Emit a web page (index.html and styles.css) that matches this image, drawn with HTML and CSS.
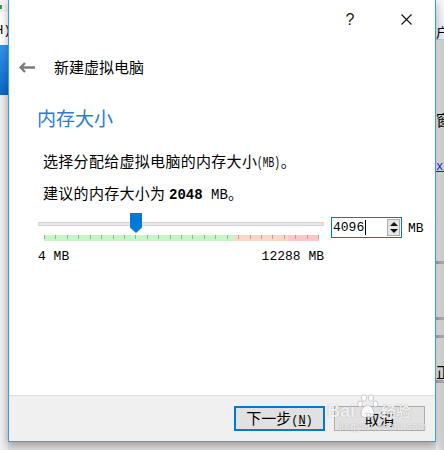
FILE: index.html
```html
<!DOCTYPE html>
<html lang="zh-CN">
<head>
  <meta charset="UTF-8">
  <title>新建虚拟电脑</title>
  <link rel="stylesheet" href="styles.css">
</head>
<body>
  <div class="desk">
    <!-- window behind, left edge -->
    <div class="side side-left">
      <div class="sl-top"><span class="sl-mark"></span></div>
      <div class="sl-menu"><span>(H)</span></div>
      <div class="sl-blue"></div>
      <div class="sl-rest"></div>
    </div>

    <div class="dialog">
      <div class="titlebar">
        <span class="cap-btn help">?</span>
        <span class="cap-btn">
          <svg width="11" height="11" viewBox="0 0 11 11"><path d="M0.5 0.5 L10.5 10.5 M10.5 0.5 L0.5 10.5" stroke="#111" stroke-width="1.1" fill="none"/></svg>
        </span>
      </div>

      <div class="header">
        <svg class="back" width="16" height="11" viewBox="0 0 16 11"><path d="M6 1 L1.6 5.5 L6 10 M1.6 5.5 H16" stroke="#7a7a7a" stroke-width="2.4" fill="none"/></svg>
        <span class="header-title">新建虚拟电脑</span>
      </div>

      <div class="page">
        <h2>内存大小</h2>
        <p class="first">选择分配给虚拟电脑的内存大小<span class="narrow">(MB)</span>。</p>
        <p>建议的内存大小为 <span class="lat"><b>2048</b> MB</span>。</p>

        <div class="mem-row">
          <div class="slider">
            <div class="track-area">
              <div class="track"><div class="thumb"></div></div>
            </div>
            <div class="scale"></div>
            <div class="limits"><span>4 MB</span><span>12288 MB</span></div>
          </div>
          <div class="spin">
            <span class="spin-value">4096</span><span class="caret"></span>
            <span class="spin-btns">
              <span class="spin-up"></span>
              <span class="spin-down"></span>
            </span>
          </div>
          <span class="unit">MB</span>
        </div>
      </div>

      <div class="footer">
        <button class="btn btn-primary">下一步<span class="mn">(<u>N</u>)</span></button>
        <button class="btn">取消</button>
        <!-- screenshot watermark -->
        <div class="wm">
          <div class="wm-row">
            <span class="wm-bai">Bai</span>
            <svg class="wm-paw" width="22" height="27" viewBox="0 0 22 27">
              <g fill="rgba(255,255,255,0.85)" stroke="rgba(140,140,140,0.5)" stroke-width="0.8">
                <ellipse cx="7" cy="5" rx="2.6" ry="3.4"/>
                <ellipse cx="14" cy="5" rx="2.6" ry="3.4"/>
                <ellipse cx="3" cy="11" rx="2.4" ry="3"/>
                <ellipse cx="18.5" cy="11" rx="2.4" ry="3"/>
                <path d="M10.5 12 C7 12 4 17 4 21 C4 24 7 25 10.5 24 C14 25 17 24 17 21 C17 17 14 12 10.5 12 Z"/>
              </g>
            </svg>
            <span class="wm-jy">经验</span>
          </div>
          <div class="wm-url">jingyan.baidu.com</div>
        </div>
      </div>
    </div>

    <!-- window behind, right edge -->
    <div class="side side-right">
      <div class="sr-top"><span>户</span></div>
      <div class="sr-rest">
        <div class="sr-char">窗</div>
        <div class="sr-link">xx</div>
        <div class="sr-line l1"></div>
        <div class="sr-line l2"></div>
        <div class="sr-line l3"></div>
        <div class="sr-char2">正</div>
        <div class="sr-line l4"></div>
      </div>
    </div>
  </div>
</body>
</html>
```

FILE: styles.css
```css
* {
  box-sizing: border-box;
}
body {
  margin: 0;
  width: 444px;
  height: 450px;
  overflow: hidden;
  background: #dcdcdc;
  font-family: "Noto Sans CJK SC", sans-serif;
  color: #000;
}
.desk {
  display: flex;
  height: 450px;
}

/* background windows */
.side {
  width: 8px;
  flex: none;
  display: flex;
  flex-direction: column;
  overflow: hidden;
}
.sl-top {
  height: 12px;
  background: #f2f2f2;
}
.sl-mark {
  display: block;
  width: 2px;
  height: 4px;
  margin-top: 5px;
  background: #3b9a3b;
}
.sl-menu {
  height: 33px;
  background: #fdfdfd;
  display: flex;
  justify-content: flex-end;
  padding-top: 12px;
  font: 13px/14px "Liberation Mono", monospace;
  white-space: nowrap;
}
.sl-menu span {
  margin-right: -3px;
}
.sl-blue {
  height: 50px;
  background: linear-gradient(#3396ea, #0a66cb);
}
.sl-rest {
  flex: 1;
  background: linear-gradient(to right, #f1f1f1, #e4e4e4);
}
.sr-top {
  height: 40px;
  background: linear-gradient(#f6f9fc, #e3ecf5);
  border-bottom: 1px solid #b9c9d9;
  padding-top: 24px;
  font-size: 13px;
  line-height: 15px;
  white-space: nowrap;
}
.sr-rest {
  flex: 1;
  background: linear-gradient(to right, #eeeeee, #d6d6d6 60%, #c9c9c9);
  white-space: nowrap;
}
.sr-char {
  margin-top: 72px;
  font-size: 15px;
  line-height: 16px;
}
.sr-link {
  margin-top: 33px;
  font: 12px/12px "Liberation Mono", monospace;
  color: #1a1aee;
  text-decoration: underline;
}
.sr-line {
  height: 3px;
  background: #a9a9a9;
}
.l1 { margin-top: 88px; }
.l2 { margin-top: 53px; }
.l3 { margin-top: 15px; }
.l4 { margin-top: 1px; }
.sr-char2 {
  margin-top: 26px;
  font-size: 15px;
  line-height: 15px;
}

/* dialog */
.dialog {
  width: 428px;
  height: 442px;
  flex: none;
  display: flex;
  flex-direction: column;
  background: #fff;
  border: 1px solid #3c9ce8;
  border-top: none;
  box-shadow: 0 3px 8px rgba(0, 0, 0, 0.3);
  position: relative;
  z-index: 1;
}
.titlebar {
  height: 38px;
  display: flex;
  justify-content: flex-end;
  gap: 10px;
  padding-right: 6px;
}
.cap-btn {
  width: 46px;
  height: 38px;
  display: flex;
  align-items: center;
  justify-content: center;
}
.help {
  font: 16px/16px "Liberation Sans", sans-serif;
  color: #1a1a1a;
  padding-top: 1px;
}
.header {
  height: 58px;
  display: flex;
  align-items: center;
  gap: 19px;
  padding-left: 10px;
}
.header-title {
  font-size: 15px;
  line-height: 20px;
}
.page {
  padding: 8px 0 0 28px;
}
h2 {
  margin: 0;
  font-size: 19px;
  line-height: 28px;
  font-weight: normal;
  color: #2c7ad6;
}
p {
  margin: 0 0 0 6px;
  font-size: 15px;
  line-height: 30px;
  letter-spacing: 0.3px;
}
p.first {
  margin-top: 14px;
}
.narrow {
  display: inline-block;
  font-family: "Liberation Mono", monospace;
  font-size: 14px;
  letter-spacing: 0;
  transform: scaleX(0.68);
  transform-origin: left center;
  margin-right: -10px;
}
.lat {
  font-family: "Liberation Mono", monospace;
  font-size: 14px;
  letter-spacing: 0;
}

/* memory slider row */
.mem-row {
  display: flex;
  align-items: flex-start;
  margin-left: 1px;
}
.slider {
  width: 286px;
  padding-top: 3px;
}
.track-area {
  height: 20px;
  padding-top: 9px;
}
.track {
  position: relative;
  height: 4px;
  background: #e7e7e7;
  border: 1px solid #d5d5d5;
}
.thumb {
  position: absolute;
  left: 91px;
  top: -10px;
  width: 12px;
  height: 20px;
  background: #0078d7;
  clip-path: polygon(0 0, 100% 0, 100% 72%, 50% 100%, 0 72%);
}
.scale {
  width: 275px;
  height: 6px;
  margin: 2px 0 0 6px;
  background:
    repeating-linear-gradient(to right, #a6a6a6 0 1px, transparent 1px 11.417px) top left / 100% 4px no-repeat,
    linear-gradient(to right, #c4f7c4 0 69%, #ffd6c4 69% 88.7%, #ffc6c6 88.7% 100%);
}
.limits {
  display: flex;
  justify-content: space-between;
  margin-top: 8px;
  font: 13px/15px "Liberation Mono", monospace;
}
.spin {
  width: 71px;
  height: 21px;
  margin: 7px 0 0 7px;
  border: 1px solid #0078d7;
  display: flex;
  align-items: center;
  padding-left: 1px;
}
.spin-value {
  font: 13px/15px "Liberation Mono", monospace;
}
.caret {
  width: 1px;
  height: 15px;
  margin-left: 1px;
  background: #000;
}
.spin-btns {
  margin-left: auto;
  margin-right: 1px;
  width: 13px;
  height: 17px;
  border: 1px solid #adadad;
  background: #e6e6e6;
  display: flex;
  flex-direction: column;
  align-items: center;
  justify-content: space-around;
}
.spin-up,
.spin-down {
  width: 0;
  height: 0;
  border-left: 4px solid transparent;
  border-right: 4px solid transparent;
}
.spin-up {
  border-bottom: 4px solid #111;
}
.spin-down {
  border-top: 4px solid #111;
}
.unit {
  margin: 11px 0 0 6px;
  font: 13px/15px "Liberation Mono", monospace;
}

/* footer buttons */
.footer {
  position: relative;
  margin-top: auto;
  height: 46px;
  border-top: 1px solid #dfdfdf;
  background: #f0f0f0;
  display: flex;
  justify-content: flex-end;
  align-items: flex-start;
  gap: 9px;
  padding: 10px 10px 0 0;
}
.btn {
  width: 91px;
  height: 25px;
  padding: 0;
  background: #e1e1e1;
  border: 1px solid #adadad;
  font-family: "Noto Sans CJK SC", sans-serif;
  font-size: 15px;
  line-height: 20px;
  color: #000;
}
.btn-primary {
  border: 2px solid #0078d7;
}
.mn {
  font-family: "Liberation Mono", monospace;
  font-size: 12px;
}
.wm {
  position: absolute;
  left: 318px;
  top: -3px;
  color: rgba(255, 255, 255, 0.85);
  text-shadow: 0 0 1px rgba(120, 120, 120, 0.7);
  pointer-events: none;
}
.wm-row {
  display: flex;
  align-items: flex-end;
  height: 27px;
}
.wm-bai {
  font: bold 18px/18px "Liberation Sans", sans-serif;
  margin-right: 2px;
}
.wm-jy {
  font-size: 15px;
  line-height: 16px;
  font-weight: bold;
  margin-left: 2px;
  margin-bottom: 1px;
}
.wm-url {
  margin: 2px 0 0 12px;
  font: 10px/10px "Liberation Sans", sans-serif;
  letter-spacing: 0.4px;
}
```
